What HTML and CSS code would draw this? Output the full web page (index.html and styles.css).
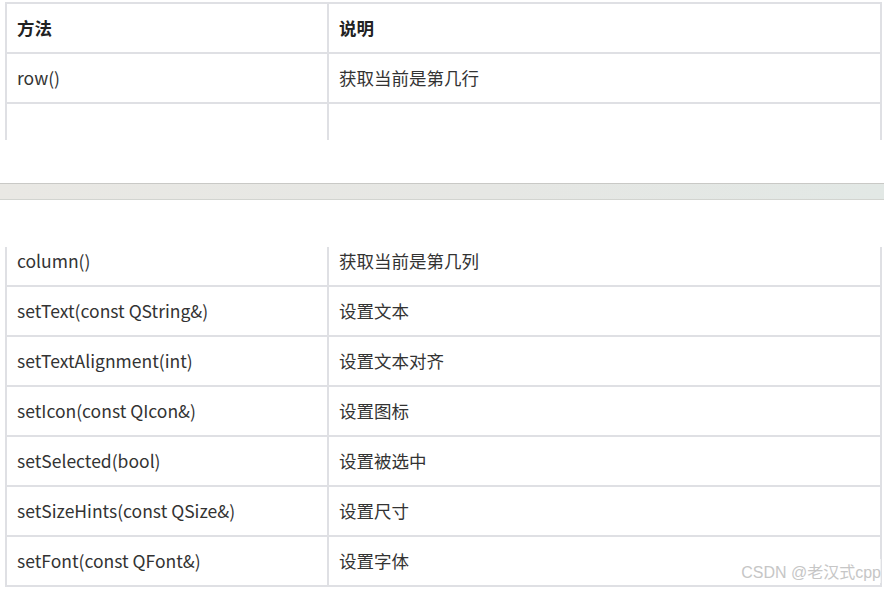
FILE: index.html
```html
<!DOCTYPE html>
<html lang="zh">
<head>
<meta charset="utf-8">
<link rel="stylesheet" href="styles.css">
</head>
<body>
<section class="part part-top">
  <div class="clip clip-top">
    <div class="grid grid-top">
      <div class="cell head">方法</div>
      <div class="cell head">说明</div>
      <div class="cell">row()</div>
      <div class="cell">获取当前是第几行</div>
      <div class="cell"></div>
      <div class="cell"></div>
    </div>
  </div>
</section>
<div class="divider"></div>
<section class="part part-bottom">
  <div class="clip clip-bottom">
    <div class="grid grid-bottom">
      <div class="cell">column()</div>
      <div class="cell">获取当前是第几列</div>
      <div class="cell">setText(const QString&amp;)</div>
      <div class="cell">设置文本</div>
      <div class="cell">setTextAlignment(int)</div>
      <div class="cell">设置文本对齐</div>
      <div class="cell">setIcon(const QIcon&amp;)</div>
      <div class="cell">设置图标</div>
      <div class="cell">setSelected(bool)</div>
      <div class="cell">设置被选中</div>
      <div class="cell">setSizeHints(const QSize&amp;)</div>
      <div class="cell">设置尺寸</div>
      <div class="cell">setFont(const QFont&amp;)</div>
      <div class="cell">设置字体</div>
    </div>
    <span class="watermark">CSDN @老汉式cpp</span>
  </div>
</section>
</body>
</html>
```
FILE: styles.css
```css
html, body {
  margin: 0;
  padding: 0;
  background: #ffffff;
  width: 884px;
  height: 591px;
  overflow: hidden;
}
body {
  font-family: "Noto Sans CJK SC", "Noto Sans", sans-serif;
  font-size: 17.5px;
  color: #333333;
}
.part {
  padding-left: 5px;
}
.part-top {
  padding-top: 2px;
}
.clip {
  overflow: hidden;
  position: relative;
  width: 877px;
}
.clip-top {
  height: 138px;
}
.clip-bottom {
  margin-top: 47px;
  height: 340px;
}
.grid {
  display: grid;
  grid-template-columns: 322px 553px;
  grid-auto-rows: 50px;
  border-left: 2px solid #dfe0e4;
}
.grid-top {
  border-top: 2px solid #dfe0e4;
}
.grid-bottom {
  margin-top: -10px;
}
.cell {
  box-sizing: border-box;
  border-right: 2px solid #dfe0e4;
  border-bottom: 2px solid #dfe0e4;
  padding: 0 10px 2px;
  display: flex;
  align-items: center;
  white-space: nowrap;
}
.cell.head {
  font-weight: 700;
  color: #222222;
}
.divider {
  margin-top: 43px;
  height: 15px;
  border-top: 1px solid #c9c9c6;
  border-bottom: 1px solid #d2d4d0;
  background: linear-gradient(to right, #e9e8e4, #e6e7e4 55%, #e2e8e5);
}
.watermark {
  position: absolute;
  right: 1px;
  bottom: 4px;
  font-family: "Liberation Sans", "Noto Sans CJK SC", sans-serif;
  font-size: 16px;
  color: #c6c6c6;
  background: rgba(255, 255, 255, 0.6);
}
```
